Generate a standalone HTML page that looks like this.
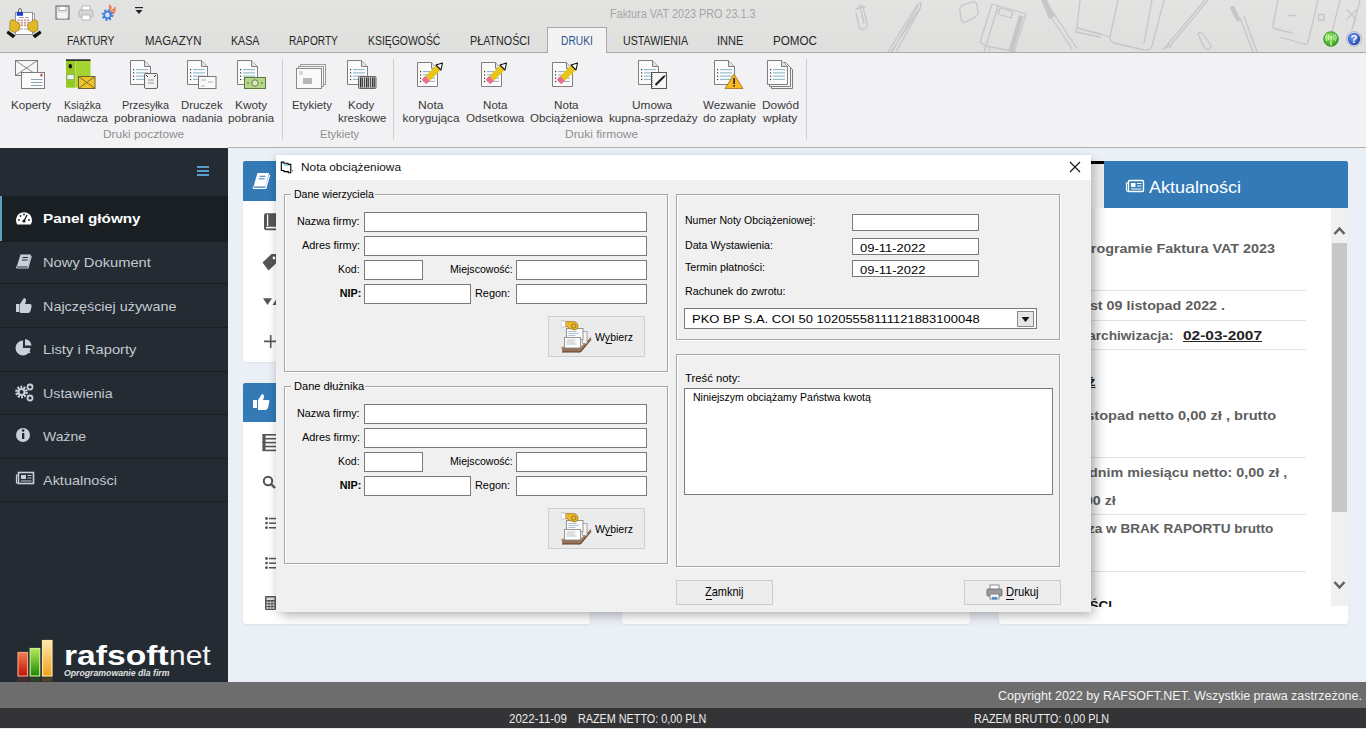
<!DOCTYPE html>
<html><head><meta charset="utf-8">
<style>
*{margin:0;padding:0;box-sizing:border-box}
html,body{width:1366px;height:729px;overflow:hidden;background:#ebeff6;font-family:"Liberation Sans",sans-serif;position:relative}
.a{position:absolute}
.t{position:absolute;white-space:nowrap;line-height:1;transform-origin:0 0}
</style></head><body>
<div class="a" style="left:0px;top:0px;width:1366px;height:52px;background:linear-gradient(#e3e4e2,#dfe0de)"></div>
<svg class="a" style="left:0;top:0" width="1366" height="52" viewBox="0 0 1366 52"><g fill="none" stroke="#c6c6c6" stroke-width="1.3" stroke-linecap="round" stroke-linejoin="round">
    <path d="M858 8 q2 -4 5 -1 l4 16 q1 5 -3 6 q-4 1 -5 -3 l-3 -13 M861 10 l3 13 M856 9 l9 -2"/>
    <path d="M888 52 L917 5 L921 2.5 L920.5 7 L891 52 M892 52 L918 6 M896 52 L921 7"/>
    <path d="M960 11 q-1 -4 3 -6 l9 -3 q4 -1 5 3 l1 6 q1 4 -3 6 l-9 5 q-4 1 -5 -3z"/>
    <path d="M992 4 l34 10 -12 38 M992 4 l-12 38 l6 4 l30 6 M998 6 l-12 40"/>
    <path d="M1000 8 l13 4 -2 6 -13 -4z"/>
    <path d="M1076 47 l-24 -36 M1072 49 l-23 -35 M1076 47 l1 1"/>
    <path d="M1080 0 l-3 28 l23 6 M1077 28 l-1 4 l24 5"/>
    <path d="M1118 0 l-8 37 q0 4 4 6 l30 7 q6 1 8 -4 l12 -46 M1090 31 l20 6 M1152 0 l-8 43"/>
    <path d="M1205 0 l-37 44 -4 5 6 -3 38 -46 M1168 44 l3 3"/>
    <path d="M1199 36 q-2 -3 1 -4 l3 2 7 10 q2 4 -1 5 q-3 1 -5 -2z"/>
    <path d="M1240 18 l13 34 M1244 16 l13 36"/>
    <path d="M1278 0 l-5 25 q-1 3 3 4 l16 4 M1318 0 l-10 42 q0 3 -4 2 l-24 -7 M1340 0 l-10 40 M1360 0 l-8 30"/>
    <path d="M1289 15.5 h7 M1318.5 14.5 h5.5 v5.5 h-5.5z M1347 10 l9 9 M1356 10 l-9 9"/>
    </g>
    <path d="M1041 0 h6 l8 16 -6 3z" fill="#c6c6c6"/>
    <path d="M1230 8 q1 -3 4 -2 l7 14 -4 2z" fill="#c6c6c6"/>
    <path d="M1019 15 l4.5 1.3 -10.5 36 -4.5 -1.3z" fill="#c6c6c6"/>
    <path d="M986 46 l-2 6 M990 47 l-1 5" stroke="#c6c6c6" stroke-width="1.3"/>
    </svg>
<div class="a" style="left:0px;top:52px;width:1366px;height:1px;background:#a9a9a9"></div>
<div class="t" id="t0" style="left:609.80px;top:7.74px;font-size:12px;color:#a6a6a6;font-weight:normal;font-family:'Liberation Sans',sans-serif;transform:scaleX(0.9020);">Faktura VAT 2023 PRO 23.1.3</div>
<div class="a" style="left:547px;top:27px;width:60px;height:27px;background:#f3f3f4;border:1px solid #a9a9a9;border-bottom:none"></div>
<div class="t" id="t1" style="left:67.30px;top:34.84px;font-size:12px;color:#262626;font-weight:normal;font-family:'Liberation Sans',sans-serif;transform:scaleX(0.8617);">FAKTURY</div>
<div class="t" id="t2" style="left:144.90px;top:34.84px;font-size:12px;color:#262626;font-weight:normal;font-family:'Liberation Sans',sans-serif;transform:scaleX(0.9521);">MAGAZYN</div>
<div class="t" id="t3" style="left:231.30px;top:34.84px;font-size:12px;color:#262626;font-weight:normal;font-family:'Liberation Sans',sans-serif;transform:scaleX(0.8871);">KASA</div>
<div class="t" id="t4" style="left:289.30px;top:34.84px;font-size:12px;color:#262626;font-weight:normal;font-family:'Liberation Sans',sans-serif;transform:scaleX(0.8461);">RAPORTY</div>
<div class="t" id="t5" style="left:368.30px;top:34.84px;font-size:12px;color:#262626;font-weight:normal;font-family:'Liberation Sans',sans-serif;transform:scaleX(0.8687);">KSIĘGOWOŚĆ</div>
<div class="t" id="t6" style="left:470.20px;top:34.84px;font-size:12px;color:#262626;font-weight:normal;font-family:'Liberation Sans',sans-serif;transform:scaleX(0.8953);">PŁATNOŚCI</div>
<div class="t" id="t7" style="left:560.60px;top:34.84px;font-size:12px;color:#2c5391;font-weight:normal;font-family:'Liberation Sans',sans-serif;transform:scaleX(0.8515);">DRUKI</div>
<div class="t" id="t8" style="left:622.50px;top:34.84px;font-size:12px;color:#262626;font-weight:normal;font-family:'Liberation Sans',sans-serif;transform:scaleX(0.8862);">USTAWIENIA</div>
<div class="t" id="t9" style="left:717.10px;top:34.84px;font-size:12px;color:#262626;font-weight:normal;font-family:'Liberation Sans',sans-serif;transform:scaleX(0.9208);">INNE</div>
<div class="t" id="t10" style="left:772.70px;top:34.84px;font-size:12px;color:#262626;font-weight:normal;font-family:'Liberation Sans',sans-serif;transform:scaleX(0.9704);">POMOC</div>
<svg class="a" style="left:0px;top:0px;" width="44" height="42" viewBox="0 0 44 42">
    <path d="M18.5 12 v-2.5 q1.5 -2.5 3 0 v2.5" fill="none" stroke="#555" stroke-width="0.9"/>
    <rect x="17.5" y="13.5" width="17" height="21" fill="#f0f0f0" stroke="#999" stroke-width="0.8"/>
    <rect x="15.5" y="12.5" width="17" height="22" fill="#fdfdfd" stroke="#8a8a8a" stroke-width="0.9"/>
    <rect x="16.8" y="12" width="6.2" height="3.8" fill="#1a3fc8"/>
    <path d="M19 17.5 h5 M25.5 17.5 h3 M19 29 h4 M24 29 h5" stroke="#888" stroke-width="0.8"/>
    <g fill="#c89090"><rect x="17.5" y="19.5" width="2.2" height="1.6"/><rect x="20.7" y="19.5" width="2.2" height="1.6"/><rect x="23.9" y="19.5" width="2.2" height="1.6"/><rect x="27.1" y="19.5" width="2.2" height="1.6"/>
    <rect x="17.5" y="22" width="2.2" height="1.6"/><rect x="20.7" y="22" width="2.2" height="1.6"/><rect x="23.9" y="22" width="2.2" height="1.6"/><rect x="27.1" y="22" width="2.2" height="1.6"/>
    <rect x="17.5" y="24.5" width="2.2" height="1.6"/><rect x="20.7" y="24.5" width="2.2" height="1.6"/><rect x="23.9" y="24.5" width="2.2" height="1.6"/><rect x="27.1" y="24.5" width="2.2" height="1.6"/></g>
    <path d="M9.8 23 q0.5 -3.8 3.7 -3.2 q3 1 6.8 5.5 l-1.5 5 l-4.5 2.2 l-4.5 -2.5z" fill="#e0b828" stroke="#8a7010" stroke-width="0.6"/>
    <path d="M37.8 23 q-0.5 -3.8 -3.7 -3.2 q-3 1 -6.8 5.5 l1.5 5 l4.5 2.2 l4.5 -2.5z" fill="#e0b828" stroke="#8a7010" stroke-width="0.6"/>
    <path d="M8 30.5 l7.5 5 l-2.5 2.8 l-6.5 -5z M40 30.5 l-7.5 5 l2.5 2.8 l6.5 -5z" fill="#111"/>
    </svg>
<svg class="a" style="left:55px;top:5px;" width="15" height="15" viewBox="0 0 15 15"><rect x="1" y="1" width="13" height="13" fill="#e4e4e4" stroke="#5a5a5a" stroke-width="1"/>
    <rect x="4" y="1.5" width="7" height="4" fill="#fff" stroke="#888" stroke-width="0.6"/><rect x="3" y="8" width="9" height="5.5" fill="#f4f4f4"/></svg>
<svg class="a" style="left:78px;top:5px;" width="16" height="16" viewBox="0 0 16 16"><rect x="4" y="1" width="8" height="5" fill="#fff" stroke="#aaa" stroke-width="0.8"/>
    <rect x="1" y="5" width="14" height="7" rx="1.5" fill="#d6d6d6" stroke="#aaa" stroke-width="0.8"/>
    <rect x="4" y="10" width="8" height="5" fill="#fff" stroke="#aaa" stroke-width="0.8"/></svg>
<svg class="a" style="left:101px;top:3px;" width="17" height="19" viewBox="0 0 17 19"><path d="M8 1 q4 2 2 6 q3 -1 4 -4 q2 4 -1 8 l-5 1z" fill="#f07050" opacity=".9"/><path d="M9 5 q2 1 1 4 q2 -1 2.5 -2.5 q0.5 3 -2 5z" fill="#f8c080"/>
    <circle cx="6.5" cy="12" r="4.6" fill="none" stroke="#3a80e0" stroke-width="2.6" stroke-dasharray="1.8 1.8"/><circle cx="6.5" cy="12" r="3.3" fill="none" stroke="#3a80e0" stroke-width="1.8"/><circle cx="6.5" cy="12" r="1.5" fill="#c8e0ff"/></svg>
<svg class="a" style="left:134px;top:6px;" width="10" height="9" viewBox="0 0 10 9"><rect x="1" y="1" width="8" height="1.2" fill="#222"/><path d="M1.5 4 h7 l-3.5 4z" fill="#222"/></svg>
<svg class="a" style="left:1323px;top:31px;" width="16" height="16" viewBox="0 0 16 16"><defs><radialGradient id="gg" cx="40%" cy="35%" r="70%"><stop offset="0" stop-color="#a8ec70"/><stop offset="1" stop-color="#2a9a10"/></radialGradient></defs>
    <circle cx="8" cy="8" r="7.3" fill="url(#gg)" stroke="#2a8a20" stroke-width="0.8"/><path d="M7.3 14.5 L7.8 7 h0.6 L8.9 14.5z" fill="#c8f8b0"/><circle cx="8.1" cy="6.6" r="1.1" fill="#e0ffd0"/><path d="M5.6 9 q-1.2 -2.5 0 -5 M10.6 9 q1.2 -2.5 0 -5 M3.8 10 q-1.8 -3.5 0 -7 M12.4 10 q1.8 -3.5 0 -7" stroke="#d8ffc8" stroke-width="0.9" fill="none"/></svg>
<svg class="a" style="left:1346px;top:31px;" width="16" height="16" viewBox="0 0 16 16"><defs><radialGradient id="bg" cx="40%" cy="35%" r="70%"><stop offset="0" stop-color="#7aa0f0"/><stop offset="1" stop-color="#1a3fb0"/></radialGradient></defs>
    <circle cx="8" cy="8" r="7.4" fill="#e8ecf8" stroke="#7080a0" stroke-width="0.5"/><circle cx="8" cy="8" r="6.2" fill="url(#bg)"/><text x="8" y="12.3" text-anchor="middle" font-family="Liberation Sans" font-weight="bold" font-size="11.5" fill="#fff">?</text></svg>
<div class="a" style="left:0px;top:53px;width:1366px;height:95px;background:#f2f2f4"></div>
<div class="a" style="left:0px;top:146px;width:1366px;height:1px;background:#f7f7f8"></div>
<div class="a" style="left:228px;top:147px;width:1138px;height:1px;background:#acacae"></div>
<div class="t" id="t11" style="left:10.50px;top:100.01px;font-size:11.8px;color:#383838;font-weight:normal;font-family:'Liberation Sans',sans-serif;transform:scaleX(0.9839);">Koperty</div>
<div class="t" id="t12" style="left:63.70px;top:100.01px;font-size:11.8px;color:#383838;font-weight:normal;font-family:'Liberation Sans',sans-serif;transform:scaleX(0.8956);">Książka</div>
<div class="t" id="t13" style="left:56.80px;top:112.51px;font-size:11.8px;color:#383838;font-weight:normal;font-family:'Liberation Sans',sans-serif;transform:scaleX(0.9562);">nadawcza</div>
<div class="t" id="t14" style="left:121.50px;top:100.01px;font-size:11.8px;color:#383838;font-weight:normal;font-family:'Liberation Sans',sans-serif;transform:scaleX(0.9190);">Przesyłka</div>
<div class="t" id="t15" style="left:113.50px;top:112.51px;font-size:11.8px;color:#383838;font-weight:normal;font-family:'Liberation Sans',sans-serif;transform:scaleX(1.0148);">pobraniowa</div>
<div class="t" id="t16" style="left:181.40px;top:100.01px;font-size:11.8px;color:#383838;font-weight:normal;font-family:'Liberation Sans',sans-serif;transform:scaleX(0.9615);">Druczek</div>
<div class="t" id="t17" style="left:181.80px;top:112.51px;font-size:11.8px;color:#383838;font-weight:normal;font-family:'Liberation Sans',sans-serif;transform:scaleX(0.9690);">nadania</div>
<div class="t" id="t18" style="left:235.30px;top:100.01px;font-size:11.8px;color:#383838;font-weight:normal;font-family:'Liberation Sans',sans-serif;transform:scaleX(1.0054);">Kwoty</div>
<div class="t" id="t19" style="left:228.40px;top:112.51px;font-size:11.8px;color:#383838;font-weight:normal;font-family:'Liberation Sans',sans-serif;transform:scaleX(1.0061);">pobrania</div>
<div class="t" id="t20" style="left:291.50px;top:100.01px;font-size:11.8px;color:#383838;font-weight:normal;font-family:'Liberation Sans',sans-serif;transform:scaleX(0.9658);">Etykiety</div>
<div class="t" id="t21" style="left:348.30px;top:100.01px;font-size:11.8px;color:#383838;font-weight:normal;font-family:'Liberation Sans',sans-serif;transform:scaleX(0.9743);">Kody</div>
<div class="t" id="t22" style="left:337.60px;top:112.51px;font-size:11.8px;color:#383838;font-weight:normal;font-family:'Liberation Sans',sans-serif;transform:scaleX(0.9713);">kreskowe</div>
<div class="t" id="t23" style="left:418.30px;top:100.01px;font-size:11.8px;color:#383838;font-weight:normal;font-family:'Liberation Sans',sans-serif;transform:scaleX(1.0232);">Nota</div>
<div class="t" id="t24" style="left:402.50px;top:112.51px;font-size:11.8px;color:#383838;font-weight:normal;font-family:'Liberation Sans',sans-serif;">korygująca</div>
<div class="t" id="t25" style="left:482.80px;top:100.01px;font-size:11.8px;color:#383838;font-weight:normal;font-family:'Liberation Sans',sans-serif;transform:scaleX(0.9831);">Nota</div>
<div class="t" id="t26" style="left:465.50px;top:112.51px;font-size:11.8px;color:#383838;font-weight:normal;font-family:'Liberation Sans',sans-serif;transform:scaleX(0.9879);">Odsetkowa</div>
<div class="t" id="t27" style="left:553.80px;top:100.01px;font-size:11.8px;color:#383838;font-weight:normal;font-family:'Liberation Sans',sans-serif;transform:scaleX(0.9871);">Nota</div>
<div class="t" id="t28" style="left:529.50px;top:112.51px;font-size:11.8px;color:#383838;font-weight:normal;font-family:'Liberation Sans',sans-serif;transform:scaleX(0.9837);">Obciążeniowa</div>
<div class="t" id="t29" style="left:632.40px;top:100.01px;font-size:11.8px;color:#383838;font-weight:normal;font-family:'Liberation Sans',sans-serif;transform:scaleX(1.0050);">Umowa</div>
<div class="t" id="t30" style="left:608.70px;top:112.51px;font-size:11.8px;color:#383838;font-weight:normal;font-family:'Liberation Sans',sans-serif;transform:scaleX(0.9862);">kupna-sprzedaży</div>
<div class="t" id="t31" style="left:703.20px;top:100.01px;font-size:11.8px;color:#383838;font-weight:normal;font-family:'Liberation Sans',sans-serif;transform:scaleX(0.9757);">Wezwanie</div>
<div class="t" id="t32" style="left:702.60px;top:112.51px;font-size:11.8px;color:#383838;font-weight:normal;font-family:'Liberation Sans',sans-serif;transform:scaleX(0.9873);">do zapłaty</div>
<div class="t" id="t33" style="left:761.70px;top:100.01px;font-size:11.8px;color:#383838;font-weight:normal;font-family:'Liberation Sans',sans-serif;transform:scaleX(1.0072);">Dowód</div>
<div class="t" id="t34" style="left:763.30px;top:112.51px;font-size:11.8px;color:#383838;font-weight:normal;font-family:'Liberation Sans',sans-serif;transform:scaleX(1.0253);">wpłaty</div>
<div class="t" id="t35" style="left:102.50px;top:129.41px;font-size:11.8px;color:#8e8e8e;font-weight:normal;font-family:'Liberation Sans',sans-serif;transform:scaleX(1.0067);">Druki pocztowe</div>
<div class="t" id="t36" style="left:319.90px;top:129.41px;font-size:11.8px;color:#8e8e8e;font-weight:normal;font-family:'Liberation Sans',sans-serif;transform:scaleX(0.9489);">Etykiety</div>
<div class="t" id="t37" style="left:564.60px;top:129.41px;font-size:11.8px;color:#8e8e8e;font-weight:normal;font-family:'Liberation Sans',sans-serif;transform:scaleX(1.0137);">Druki firmowe</div>
<div class="a" style="left:282px;top:59px;width:1px;height:81px;background:#cfcfcf"></div>
<div class="a" style="left:393px;top:59px;width:1px;height:81px;background:#cfcfcf"></div>
<div class="a" style="left:806px;top:59px;width:1px;height:81px;background:#cfcfcf"></div>
<svg class="a" style="left:0;top:0" width="1366" height="150" viewBox="0 0 1366 150"><rect x="15.5" y="60.5" width="22" height="15" fill="#f6f6f6" stroke="#7a7a7a"/><path d="M15.5 60.5 L37.5 75.5 M37.5 60.5 L15.5 75.5" fill="none" stroke="#7a7a7a" stroke-width="0.9"/><rect x="21.5" y="72.5" width="23" height="16" fill="#fbfbfb" stroke="#7a7a7a"/><rect x="40.5" y="73.8" width="1.8" height="2.6" fill="#b03040"/><path d="M31 79.5 h11.5 M31 82.5 h11.5 M31 85.5 h11.5" stroke="#7e98a4" stroke-width="0.9"/><path d="M66 60 h24.5 v27.5 h-24.5z" fill="#a4d432"/><rect x="66" y="60" width="9" height="27.5" fill="#96c82a"/><rect x="75" y="60" width="0.8" height="27.5" fill="#c0e860"/><path d="M66 59.3 h24.5 v1.6 h-24.5z" fill="#222"/><ellipse cx="70.3" cy="66.3" rx="1.7" ry="2.3" fill="#111"/><rect x="67" y="74.5" width="7" height="5" fill="#f0f4ea" stroke="#7a9a50" stroke-width="0.6"/><rect x="78.5" y="76.5" width="16.5" height="12" fill="#eec428" stroke="#6a6030"/><path d="M78.5 76.5 L95 88.5 M95 76.5 L78.5 88.5" fill="none" stroke="#6a6030" stroke-width="0.9"/><path d="M130.5 60.5 h14 l6 6 v18 h-20 z" fill="#fbfbfb" stroke="#7e7e7e" stroke-width="1"/><path d="M144.5 60.5 v6 h6" fill="#e0e0e0" stroke="#7e7e7e" stroke-width="1"/><rect x="133" y="69.0" width="1.2" height="1.2" fill="#333"/><rect x="136" y="69.0" width="12" height="1.1" fill="#8fb8c8"/><rect x="133" y="72.3" width="1.2" height="1.2" fill="#333"/><rect x="136" y="72.3" width="12" height="1.1" fill="#8fb8c8"/><rect x="133" y="75.6" width="1.2" height="1.2" fill="#333"/><rect x="136" y="75.6" width="12" height="1.1" fill="#8fb8c8"/><rect x="133" y="78.9" width="1.2" height="1.2" fill="#333"/><rect x="136" y="78.9" width="12" height="1.1" fill="#8fb8c8"/><rect x="144.5" y="73.5" width="13" height="15" rx="1.5" fill="#f2f2f2" stroke="#666"/><path d="M146 75 l2 2 M156 75 l-2 2" stroke="#333"/><path d="M148 80 h6 M148 83 h6" stroke="#999"/><path d="M187.5 60.5 h14 l6 6 v18 h-20 z" fill="#fbfbfb" stroke="#7e7e7e" stroke-width="1"/><path d="M201.5 60.5 v6 h6" fill="#e0e0e0" stroke="#7e7e7e" stroke-width="1"/><rect x="190" y="69.0" width="1.2" height="1.2" fill="#333"/><rect x="193" y="69.0" width="12" height="1.1" fill="#8fb8c8"/><rect x="190" y="72.3" width="1.2" height="1.2" fill="#333"/><rect x="193" y="72.3" width="12" height="1.1" fill="#8fb8c8"/><rect x="190" y="75.6" width="1.2" height="1.2" fill="#333"/><rect x="193" y="75.6" width="12" height="1.1" fill="#8fb8c8"/><rect x="190" y="78.9" width="1.2" height="1.2" fill="#333"/><rect x="193" y="78.9" width="12" height="1.1" fill="#8fb8c8"/><rect x="198.5" y="76.5" width="17.5" height="12" fill="#fafafa" stroke="#777"/><path d="M201 80 h5 M208 82 h5 M201 86 h4" stroke="#b0b0b0"/><path d="M237.5 60.5 h14 l6 6 v18 h-20 z" fill="#fbfbfb" stroke="#7e7e7e" stroke-width="1"/><path d="M251.5 60.5 v6 h6" fill="#e0e0e0" stroke="#7e7e7e" stroke-width="1"/><rect x="240" y="69.0" width="1.2" height="1.2" fill="#333"/><rect x="243" y="69.0" width="12" height="1.1" fill="#8fb8c8"/><rect x="240" y="72.3" width="1.2" height="1.2" fill="#333"/><rect x="243" y="72.3" width="12" height="1.1" fill="#8fb8c8"/><rect x="240" y="75.6" width="1.2" height="1.2" fill="#333"/><rect x="243" y="75.6" width="12" height="1.1" fill="#8fb8c8"/><rect x="240" y="78.9" width="1.2" height="1.2" fill="#333"/><rect x="243" y="78.9" width="12" height="1.1" fill="#8fb8c8"/><rect x="244.5" y="77.5" width="21" height="11" fill="#b6d48a" stroke="#5a7a3a"/><circle cx="255" cy="83" r="3.2" fill="#dbe8c4" stroke="#4a6a2a" stroke-width="0.8"/><path d="M247 83 h2 M261 83 h2" stroke="#4a6a2a"/><rect x="300.5" y="64.5" width="25" height="20" fill="#f4f4f4" stroke="#9a9a9a"/><rect x="298.5" y="66.5" width="25" height="20" fill="#f6f6f6" stroke="#9a9a9a"/><rect x="296.5" y="68.5" width="25" height="20" fill="#fafafa" stroke="#8a8a8a"/><path d="M303 79 h9 M303 81 h9 M303 83 h9" stroke="#666" stroke-width="0.9"/><path d="M299 72 h4 M299 74 h4" stroke="#999" stroke-width="0.6"/><path d="M347.5 60.5 h14 l6 6 v18 h-20 z" fill="#fbfbfb" stroke="#7e7e7e" stroke-width="1"/><path d="M361.5 60.5 v6 h6" fill="#e0e0e0" stroke="#7e7e7e" stroke-width="1"/><rect x="350" y="69.0" width="1.2" height="1.2" fill="#333"/><rect x="353" y="69.0" width="12" height="1.1" fill="#8fb8c8"/><rect x="350" y="72.3" width="1.2" height="1.2" fill="#333"/><rect x="353" y="72.3" width="12" height="1.1" fill="#8fb8c8"/><rect x="350" y="75.6" width="1.2" height="1.2" fill="#333"/><rect x="353" y="75.6" width="12" height="1.1" fill="#8fb8c8"/><rect x="350" y="78.9" width="1.2" height="1.2" fill="#333"/><rect x="353" y="78.9" width="12" height="1.1" fill="#8fb8c8"/><rect x="358.5" y="76.5" width="17.5" height="12" rx="1" fill="#c8c8c8" stroke="#666"/><rect x="360.0" y="77.5" width="1.4" height="10" fill="#333"/><rect x="362.0" y="77.5" width="0.8" height="10" fill="#333"/><rect x="364.0" y="77.5" width="0.8" height="10" fill="#333"/><rect x="366.0" y="77.5" width="1.4" height="10" fill="#333"/><rect x="368.0" y="77.5" width="0.8" height="10" fill="#333"/><rect x="370.0" y="77.5" width="0.8" height="10" fill="#333"/><rect x="372.0" y="77.5" width="1.4" height="10" fill="#333"/><rect x="374.0" y="77.5" width="0.8" height="10" fill="#333"/><path d="M417.5 62.5 h14 l6 6 v18 h-20 z" fill="#fbfbfb" stroke="#7e7e7e" stroke-width="1"/><path d="M431.5 62.5 v6 h6" fill="#e0e0e0" stroke="#7e7e7e" stroke-width="1"/><rect x="420" y="71.0" width="1.2" height="1.2" fill="#333"/><rect x="423" y="71.0" width="12" height="1.1" fill="#8fb8c8"/><rect x="420" y="74.3" width="1.2" height="1.2" fill="#333"/><rect x="423" y="74.3" width="12" height="1.1" fill="#8fb8c8"/><rect x="420" y="77.6" width="1.2" height="1.2" fill="#333"/><rect x="423" y="77.6" width="12" height="1.1" fill="#8fb8c8"/><rect x="420" y="80.9" width="1.2" height="1.2" fill="#333"/><rect x="423" y="80.9" width="12" height="1.1" fill="#8fb8c8"/><path d="M427.5 78.5 L438.5 67.5" stroke="#e8c418" stroke-width="6.5"/><path d="M424 82 L427.6 78.4" stroke="#e8708a" stroke-width="6.5"/><path d="M436 65 L441 70 L442.5 63z" fill="#fff" stroke="#111" stroke-width="1.1" stroke-linejoin="round"/><path d="M481.5 62.5 h14 l6 6 v18 h-20 z" fill="#fbfbfb" stroke="#7e7e7e" stroke-width="1"/><path d="M495.5 62.5 v6 h6" fill="#e0e0e0" stroke="#7e7e7e" stroke-width="1"/><rect x="484" y="71.0" width="1.2" height="1.2" fill="#333"/><rect x="487" y="71.0" width="12" height="1.1" fill="#8fb8c8"/><rect x="484" y="74.3" width="1.2" height="1.2" fill="#333"/><rect x="487" y="74.3" width="12" height="1.1" fill="#8fb8c8"/><rect x="484" y="77.6" width="1.2" height="1.2" fill="#333"/><rect x="487" y="77.6" width="12" height="1.1" fill="#8fb8c8"/><rect x="484" y="80.9" width="1.2" height="1.2" fill="#333"/><rect x="487" y="80.9" width="12" height="1.1" fill="#8fb8c8"/><path d="M491.5 78.5 L502.5 67.5" stroke="#e8c418" stroke-width="6.5"/><path d="M488 82 L491.6 78.4" stroke="#e8708a" stroke-width="6.5"/><path d="M500 65 L505 70 L506.5 63z" fill="#fff" stroke="#111" stroke-width="1.1" stroke-linejoin="round"/><path d="M552.5 62.5 h14 l6 6 v18 h-20 z" fill="#fbfbfb" stroke="#7e7e7e" stroke-width="1"/><path d="M566.5 62.5 v6 h6" fill="#e0e0e0" stroke="#7e7e7e" stroke-width="1"/><rect x="555" y="71.0" width="1.2" height="1.2" fill="#333"/><rect x="558" y="71.0" width="12" height="1.1" fill="#8fb8c8"/><rect x="555" y="74.3" width="1.2" height="1.2" fill="#333"/><rect x="558" y="74.3" width="12" height="1.1" fill="#8fb8c8"/><rect x="555" y="77.6" width="1.2" height="1.2" fill="#333"/><rect x="558" y="77.6" width="12" height="1.1" fill="#8fb8c8"/><rect x="555" y="80.9" width="1.2" height="1.2" fill="#333"/><rect x="558" y="80.9" width="12" height="1.1" fill="#8fb8c8"/><path d="M562.5 78.5 L573.5 67.5" stroke="#e8c418" stroke-width="6.5"/><path d="M559 82 L562.6 78.4" stroke="#e8708a" stroke-width="6.5"/><path d="M571 65 L576 70 L577.5 63z" fill="#fff" stroke="#111" stroke-width="1.1" stroke-linejoin="round"/><path d="M638.5 60.5 h14 l6 6 v18 h-20 z" fill="#fbfbfb" stroke="#7e7e7e" stroke-width="1"/><path d="M652.5 60.5 v6 h6" fill="#e0e0e0" stroke="#7e7e7e" stroke-width="1"/><rect x="641" y="69.0" width="1.2" height="1.2" fill="#333"/><rect x="644" y="69.0" width="12" height="1.1" fill="#8fb8c8"/><rect x="641" y="72.3" width="1.2" height="1.2" fill="#333"/><rect x="644" y="72.3" width="12" height="1.1" fill="#8fb8c8"/><rect x="641" y="75.6" width="1.2" height="1.2" fill="#333"/><rect x="644" y="75.6" width="12" height="1.1" fill="#8fb8c8"/><rect x="641" y="78.9" width="1.2" height="1.2" fill="#333"/><rect x="644" y="78.9" width="12" height="1.1" fill="#8fb8c8"/><rect x="651.5" y="72.5" width="15" height="16" fill="#f6f6f6" stroke="#555"/><path d="M652 74 v13" stroke="#333" stroke-dasharray="1 1"/><path d="M656 86 l8 -8 2 -3 -3 1 -8 8z" fill="#222"/><path d="M714.5 60.5 h14 l6 6 v18 h-20 z" fill="#fbfbfb" stroke="#7e7e7e" stroke-width="1"/><path d="M728.5 60.5 v6 h6" fill="#e0e0e0" stroke="#7e7e7e" stroke-width="1"/><rect x="717" y="69.0" width="1.2" height="1.2" fill="#333"/><rect x="720" y="69.0" width="12" height="1.1" fill="#8fb8c8"/><rect x="717" y="72.3" width="1.2" height="1.2" fill="#333"/><rect x="720" y="72.3" width="12" height="1.1" fill="#8fb8c8"/><rect x="717" y="75.6" width="1.2" height="1.2" fill="#333"/><rect x="720" y="75.6" width="12" height="1.1" fill="#8fb8c8"/><rect x="717" y="78.9" width="1.2" height="1.2" fill="#333"/><rect x="720" y="78.9" width="12" height="1.1" fill="#8fb8c8"/><path d="M734 74 l9 14.5 h-18z" fill="#f5b820" stroke="#a07010" stroke-width="0.8"/><rect x="733.3" y="78" width="1.6" height="6" fill="#222"/><rect x="733.3" y="85" width="1.6" height="1.6" fill="#222"/><path d="M771.5 64.5 h16 l5 5 v19 h-21z" fill="#f4f4f4" stroke="#7e7e7e"/><path d="M769.5 62.5 h16 l5 5 v19 h-21z" fill="#f8f8f8" stroke="#7e7e7e"/><path d="M767.5 60.5 h14 l6 6 v18 h-20 z" fill="#fbfbfb" stroke="#7e7e7e" stroke-width="1"/><path d="M781.5 60.5 v6 h6" fill="#e0e0e0" stroke="#7e7e7e" stroke-width="1"/><rect x="770" y="69.0" width="1.2" height="1.2" fill="#333"/><rect x="773" y="69.0" width="12" height="1.1" fill="#8fb8c8"/><rect x="770" y="72.3" width="1.2" height="1.2" fill="#333"/><rect x="773" y="72.3" width="12" height="1.1" fill="#8fb8c8"/><rect x="770" y="75.6" width="1.2" height="1.2" fill="#333"/><rect x="773" y="75.6" width="12" height="1.1" fill="#8fb8c8"/><rect x="770" y="78.9" width="1.2" height="1.2" fill="#333"/><rect x="773" y="78.9" width="12" height="1.1" fill="#8fb8c8"/></svg>
<div class="a" style="left:228px;top:148px;width:1138px;height:534px;background:#ebeff6"></div>
<div class="a" style="left:243px;top:161px;width:347px;height:201px;background:#fff;border-radius:3px;box-shadow:0 1px 2px rgba(0,0,0,.06)"></div>
<div class="a" style="left:243px;top:161px;width:347px;height:40px;background:#337ab7;border-radius:2px 2px 0 0"></div>
<div class="a" style="left:243px;top:383px;width:347px;height:241px;background:#fff;border-radius:3px;box-shadow:0 1px 2px rgba(0,0,0,.06)"></div>
<div class="a" style="left:243px;top:383px;width:347px;height:39px;background:#337ab7;border-radius:2px 2px 0 0"></div>
<div class="a" style="left:622px;top:161px;width:348px;height:463px;background:#fff;border-radius:3px;box-shadow:0 1px 2px rgba(0,0,0,.06)"></div>
<div class="a" style="left:999px;top:161px;width:349px;height:463px;background:#fff;border-radius:3px;box-shadow:0 1px 2px rgba(0,0,0,.06)"></div>
<div class="a" style="left:999px;top:161px;width:349px;height:47px;background:#337ab7;border-radius:2px 2px 0 0"></div>
<svg class="a" style="left:0;top:0" width="600" height="729" viewBox="0 0 600 729"><path d="M257.5 173 h11.5 l-3.5 13.5 h-12z" fill="#fff"/><path d="M253.3 186.8 q-0.5 1.5 1.5 1.5 h11 l3.8 -13.5" fill="none" stroke="#fff" stroke-width="1.3"/><path d="M259.5 176.3 h6 M258.8 178.8 h6" stroke="#337ab7" stroke-width="1"/><rect x="253" y="400" width="4" height="8" fill="#fff"/><path d="M258 400 l4 -6 q2 0 2 3 l-1 3 h5 q2 0 1 3 l-1 5 q-1 2 -3 2 h-7z" fill="#fff"/><path d="M265.5 213.2 h11 v17 h-10 q-2.5 0 -2.5 -2.5 v-12 q0 -2.5 1.5 -2.5z" fill="#555"/><rect x="267" y="214.5" width="1.2" height="11.5" fill="#fff"/><rect x="266" y="226.8" width="11" height="1.6" fill="#fff"/><path d="M262.5 262.5 l9 -8.5 h5 v9 l-8 7.5z" fill="#555"/><circle cx="274" cy="258" r="1.4" fill="#fff"/><path d="M263 298.2 h9 l-4.5 6.7z M272.5 304.9 l4 -6 v6z" fill="#555"/><path d="M264 341.4 h13 M270.7 335 v13" stroke="#555" stroke-width="1.6"/><rect x="262.5" y="434" width="3" height="17" fill="#555"/><rect x="262.5" y="434.0" width="14" height="1.6" fill="#555"/><rect x="262.5" y="437.9" width="14" height="1.6" fill="#555"/><rect x="262.5" y="441.8" width="14" height="1.6" fill="#555"/><rect x="262.5" y="445.7" width="14" height="1.6" fill="#555"/><rect x="262.5" y="449.6" width="14" height="1.6" fill="#555"/><circle cx="268" cy="481" r="4.2" fill="none" stroke="#555" stroke-width="2"/><path d="M271 484 l4 4" stroke="#555" stroke-width="2.4"/><circle cx="266.5" cy="518.5" r="1.4" fill="#555"/><rect x="269" y="517.8" width="8" height="1.5" fill="#555"/><circle cx="266.5" cy="523.1" r="1.4" fill="#555"/><rect x="269" y="522.4" width="8" height="1.5" fill="#555"/><circle cx="266.5" cy="527.7" r="1.4" fill="#555"/><rect x="269" y="527.0" width="8" height="1.5" fill="#555"/><circle cx="266.5" cy="558.5" r="1.4" fill="#555"/><rect x="269" y="557.8" width="8" height="1.5" fill="#555"/><circle cx="266.5" cy="563.1" r="1.4" fill="#555"/><rect x="269" y="562.4" width="8" height="1.5" fill="#555"/><circle cx="266.5" cy="567.7" r="1.4" fill="#555"/><rect x="269" y="567.0" width="8" height="1.5" fill="#555"/><rect x="265" y="596" width="11" height="14" rx="1" fill="#555"/><rect x="266.5" y="597.5" width="8" height="2.5" fill="#ddd"/><rect x="266.5" y="601.5" width="2" height="1.8" fill="#ddd"/><rect x="269.5" y="601.5" width="2" height="1.8" fill="#ddd"/><rect x="272.5" y="601.5" width="2" height="1.8" fill="#ddd"/><rect x="266.5" y="604.3" width="2" height="1.8" fill="#ddd"/><rect x="269.5" y="604.3" width="2" height="1.8" fill="#ddd"/><rect x="272.5" y="604.3" width="2" height="1.8" fill="#ddd"/><rect x="266.5" y="607.1" width="2" height="1.8" fill="#ddd"/><rect x="269.5" y="607.1" width="2" height="1.8" fill="#ddd"/><rect x="272.5" y="607.1" width="2" height="1.8" fill="#ddd"/></svg>
<svg class="a" style="left:1125px;top:179px;" width="20" height="15" viewBox="0 0 20 15"><rect x="3.5" y="1.5" width="15" height="11" rx="1" fill="none" stroke="#fff" stroke-width="1.4"/><path d="M3.5 4 h-2 v7 q0 1.5 2 1.5" fill="none" stroke="#fff" stroke-width="1.2"/><rect x="6" y="4" width="4.5" height="4" fill="#fff"/><path d="M12 4.5 h4.5 M12 7 h4.5 M6 10 h10.5" stroke="#fff" stroke-width="1.1"/></svg>
<div class="t" id="t38" style="left:1149.00px;top:179.03px;font-size:16.5px;color:#ffffff;font-weight:normal;font-family:'Liberation Sans',sans-serif;transform:scaleX(1.0902);">Aktualności</div>
<div class="a" style="left:1331px;top:208px;width:17px;height:398px;background:#f0f0f0"></div>
<div class="a" style="left:1332px;top:243px;width:15px;height:268.5px;background:#c8c8c8"></div>
<svg class="a" style="left:1333px;top:225px;" width="13" height="11" viewBox="0 0 13 11"><path d="M1.5 9 L6.5 3.5 L11.5 9" fill="none" stroke="#606060" stroke-width="2.5"/></svg>
<svg class="a" style="left:1333px;top:580px;" width="13" height="11" viewBox="0 0 13 11"><path d="M1.5 2 L6.5 7.5 L11.5 2" fill="none" stroke="#606060" stroke-width="2.5"/></svg>
<div class="t" id="t39" style="left:1081.50px;top:241.87px;font-size:13.5px;color:#5e5e5e;font-weight:bold;font-family:'Liberation Sans',sans-serif;transform:scaleX(1.0664);">programie Faktura VAT 2023</div>
<div class="a" style="left:1010px;top:290px;width:296px;height:1px;background:#e2e2e2"></div>
<div class="t" id="t40" style="left:1077.50px;top:298.67px;font-size:13.5px;color:#5e5e5e;font-weight:bold;font-family:'Liberation Sans',sans-serif;transform:scaleX(1.0589);">jest 09 listopad 2022 .</div>
<div class="a" style="left:1010px;top:320px;width:296px;height:1px;background:#e2e2e2"></div>
<div class="t" id="t41" style="left:1088.30px;top:329.07px;font-size:13.5px;color:#5e5e5e;font-weight:bold;font-family:'Liberation Sans',sans-serif;transform:scaleX(1.0185);">archiwizacja:</div>
<div class="t" id="t42" style="left:1182.50px;top:329.07px;font-size:13.5px;color:#222;font-weight:bold;font-family:'Liberation Sans',sans-serif;text-decoration:underline;transform:scaleX(1.1439);">02-03-2007</div>
<div class="a" style="left:1010px;top:349px;width:296px;height:1px;background:#e2e2e2"></div>
<div class="t" id="t43" style="left:1074.00px;top:375.27px;font-size:13.5px;color:#222;font-weight:bold;font-family:'Liberation Sans',sans-serif;text-decoration:underline;transform:scaleX(1.1467);">już</div>
<div class="t" id="t44" style="left:1077.50px;top:408.67px;font-size:13.5px;color:#5e5e5e;font-weight:bold;font-family:'Liberation Sans',sans-serif;transform:scaleX(1.0835);">listopad netto 0,00 zł , brutto</div>
<div class="a" style="left:1010px;top:457px;width:296px;height:1px;background:#e2e2e2"></div>
<div class="t" id="t45" style="left:1081.00px;top:465.97px;font-size:13.5px;color:#5e5e5e;font-weight:bold;font-family:'Liberation Sans',sans-serif;transform:scaleX(1.0617);">ednim miesiącu netto: 0,00 zł ,</div>
<div class="t" id="t46" style="left:1085.30px;top:493.57px;font-size:13.5px;color:#5e5e5e;font-weight:bold;font-family:'Liberation Sans',sans-serif;transform:scaleX(1.0485);">00 zł</div>
<div class="a" style="left:1010px;top:514px;width:296px;height:1px;background:#e2e2e2"></div>
<div class="t" id="t47" style="left:1088.30px;top:522.47px;font-size:13.5px;color:#5e5e5e;font-weight:bold;font-family:'Liberation Sans',sans-serif;transform:scaleX(1.0049);">za w BRAK RAPORTU brutto</div>
<div class="a" style="left:1010px;top:571px;width:296px;height:1px;background:#e2e2e2"></div>
<div class="a" style="left:1000px;top:590px;width:200px;height:16.5px;overflow:hidden"><div class="t" style="left:0;top:9px;font-size:13.5px;font-weight:bold;color:#111;width:112px;text-align:right">AKTUALNOŚCI</div></div>
<div class="a" style="left:0px;top:148px;width:228px;height:534px;background:#242b33"></div>
<div class="a" style="left:197px;top:166px;width:12px;height:2px;background:#5a9ccc"></div>
<div class="a" style="left:197px;top:170px;width:12px;height:2px;background:#5a9ccc"></div>
<div class="a" style="left:197px;top:174px;width:12px;height:2px;background:#5a9ccc"></div>
<div class="a" style="left:0px;top:196px;width:228px;height:45px;background:#1a1f24"></div>
<div class="a" style="left:0px;top:196px;width:2px;height:45px;background:#5aa0b8"></div>
<div class="a" style="left:0px;top:241px;width:228px;height:1px;background:#1b2025"></div>
<div class="a" style="left:0px;top:283px;width:228px;height:1px;background:#1b2025"></div>
<div class="a" style="left:0px;top:327px;width:228px;height:1px;background:#1b2025"></div>
<div class="a" style="left:0px;top:371px;width:228px;height:1px;background:#1b2025"></div>
<div class="a" style="left:0px;top:414px;width:228px;height:1px;background:#1b2025"></div>
<div class="a" style="left:0px;top:458px;width:228px;height:1px;background:#1b2025"></div>
<div class="a" style="left:0px;top:501px;width:228px;height:1px;background:#1b2025"></div>
<div class="t" id="t48" style="left:42.80px;top:212.14px;font-size:13.3px;color:#ffffff;font-weight:bold;font-family:'Liberation Sans',sans-serif;transform:scaleX(1.1484);">Panel główny</div>
<div class="t" id="t49" style="left:42.80px;top:256.20px;font-size:13px;color:#c2c9d0;font-weight:normal;font-family:'Liberation Sans',sans-serif;transform:scaleX(1.1313);">Nowy Dokument</div>
<div class="t" id="t50" style="left:43.10px;top:299.90px;font-size:13px;color:#c2c9d0;font-weight:normal;font-family:'Liberation Sans',sans-serif;transform:scaleX(1.1063);">Najczęściej używane</div>
<div class="t" id="t51" style="left:43.00px;top:342.80px;font-size:13px;color:#c2c9d0;font-weight:normal;font-family:'Liberation Sans',sans-serif;transform:scaleX(1.1351);">Listy i Raporty</div>
<div class="t" id="t52" style="left:42.90px;top:387.00px;font-size:13px;color:#c2c9d0;font-weight:normal;font-family:'Liberation Sans',sans-serif;transform:scaleX(1.0960);">Ustawienia</div>
<div class="t" id="t53" style="left:42.90px;top:430.20px;font-size:13px;color:#c2c9d0;font-weight:normal;font-family:'Liberation Sans',sans-serif;transform:scaleX(1.0779);">Ważne</div>
<div class="t" id="t54" style="left:42.90px;top:474.20px;font-size:13px;color:#c2c9d0;font-weight:normal;font-family:'Liberation Sans',sans-serif;transform:scaleX(1.1115);">Aktualności</div>
<svg class="a" style="left:0;top:148px" width="228" height="534" viewBox="0 148 228 534"><path d="M17.2 224.4 A8 8 0 1 1 30.8 224.4z" fill="#fff"/><circle cx="24" cy="221" r="1.6" fill="#1a1f24"/><path d="M24 221 l3 -6" stroke="#1a1f24" stroke-width="1.4"/><g fill="#1a1f24"><circle cx="19" cy="220" r="0.9"/><circle cx="20.5" cy="216" r="0.9"/><circle cx="24" cy="214.5" r="0.9"/><circle cx="29" cy="220" r="0.9"/></g><path d="M20.5 254.5 h10.5 l-3.2 12 h-11z" fill="#c8d0d8"/><path d="M16.6 266.5 q-0.5 1.5 1.3 1.5 h10 l3.4 -12" fill="none" stroke="#c8d0d8" stroke-width="1.2"/><path d="M22.5 257.5 h5.5 M22 260 h5.5" stroke="#232a31" stroke-width="1"/><rect x="16" y="304" width="3.5" height="8" fill="#c8d0d8"/><path d="M20 304 l4 -6 q2 0 2 3 l-1 3 h5 q2 0 1.5 3 l-1 4 q-0.5 2 -2.5 2 h-8z" fill="#c8d0d8"/><path d="M23 340.5 a7.5 7.5 0 1 0 7.5 7.5 h-7.5z" fill="#c8d0d8"/><path d="M25 339 a7.5 7.5 0 0 1 6.5 6.5 h-6.5z" fill="#c8d0d8"/><path d="M25 348 l5 5" stroke="#c8d0d8" stroke-width="1.5"/><circle cx="21.5" cy="392" r="4.8" fill="none" stroke="#c8d0d8" stroke-width="3" stroke-dasharray="1.8 1.2"/><circle cx="21.5" cy="392" r="3" fill="none" stroke="#c8d0d8" stroke-width="2"/><circle cx="30" cy="387" r="2.5" fill="none" stroke="#c8d0d8" stroke-width="1.8"/><circle cx="30" cy="398" r="2.5" fill="none" stroke="#c8d0d8" stroke-width="1.8"/><circle cx="23" cy="435" r="7" fill="#c8d0d8"/><rect x="22" y="433" width="2.3" height="6" fill="#232a31"/><circle cx="23.1" cy="430.5" r="1.3" fill="#232a31"/><rect x="18.5" y="472.5" width="15" height="11" fill="none" stroke="#c8d0d8" stroke-width="1.6"/><path d="M18.5 475 h-2 v8 h2" fill="none" stroke="#c8d0d8" stroke-width="1.2"/><rect x="21" y="475" width="5" height="4" fill="#c8d0d8"/><path d="M27.5 475.5 h4 M27.5 478 h4 M21 481 h10.5" stroke="#c8d0d8" stroke-width="1.1"/><defs>
    <linearGradient id="lr" x1="0" y1="0" x2="0" y2="1"><stop offset="0" stop-color="#f08050"/><stop offset="1" stop-color="#c01008"/></linearGradient>
    <linearGradient id="lg" x1="0" y1="0" x2="0" y2="1"><stop offset="0" stop-color="#b8e858"/><stop offset="1" stop-color="#1a8a08"/></linearGradient>
    <linearGradient id="ly" x1="0" y1="0" x2="0" y2="1"><stop offset="0" stop-color="#ffe8b0"/><stop offset="1" stop-color="#f0a018"/></linearGradient></defs>
    <rect x="18" y="652.5" width="9.5" height="23.5" fill="url(#lr)" stroke="#f4a080" stroke-width="1.2"/>
    <rect x="30.2" y="648.5" width="9.5" height="27.5" fill="url(#lg)" stroke="#c8f090" stroke-width="1.2"/>
    <rect x="42.5" y="640.5" width="9.5" height="35.5" fill="url(#ly)" stroke="#ffe8a0" stroke-width="1.2"/>
    <rect x="17.5" y="677.5" width="10.5" height="4" fill="#7a3020" opacity=".45"/><rect x="29.7" y="677.5" width="10.5" height="4" fill="#3a6020" opacity=".45"/><rect x="42" y="677.5" width="10.5" height="4" fill="#806020" opacity=".45"/></svg>
<div class="t" id="t55" style="left:63.80px;top:641.50px;font-size:28px;color:#ffffff;font-weight:bold;font-family:'Liberation Sans',sans-serif;transform:scaleX(1.2006);">rafsoft</div>
<div class="t" id="t56" style="left:168.60px;top:641.50px;font-size:28px;color:#f4f4f4;font-weight:normal;font-family:'Liberation Sans',sans-serif;transform:scaleX(1.0684);">net</div>
<div class="t" id="t57" style="left:63.80px;top:668.72px;font-size:8.6px;color:#e0e0e0;font-weight:bold;font-family:'Liberation Sans',sans-serif;font-style:italic;transform:scaleX(1.0134);">Oprogramowanie dla firm</div>
<div class="a" style="left:0px;top:682px;width:1366px;height:26px;background:#6d6d6e"></div>
<div class="t" id="t58" style="left:997.50px;top:689.89px;font-size:12.3px;color:#f2f2f2;font-weight:normal;font-family:'Liberation Sans',sans-serif;transform:scaleX(1.0164);">Copyright 2022 by RAFSOFT.NET. Wszystkie prawa zastrzeżone.</div>
<div class="a" style="left:0px;top:708px;width:1366px;height:20px;background:#343335"></div>
<div class="a" style="left:0px;top:728px;width:1366px;height:1px;background:#e9ebef"></div>
<div class="t" id="t59" style="left:508.90px;top:712.84px;font-size:12px;color:#ededed;font-weight:normal;font-family:'Liberation Sans',sans-serif;transform:scaleX(0.9570);">2022-11-09</div>
<div class="t" id="t60" style="left:578.20px;top:712.84px;font-size:12px;color:#ededed;font-weight:normal;font-family:'Liberation Sans',sans-serif;transform:scaleX(0.9004);">RAZEM NETTO: 0,00 PLN</div>
<div class="t" id="t61" style="left:974.30px;top:712.84px;font-size:12px;color:#ededed;font-weight:normal;font-family:'Liberation Sans',sans-serif;transform:scaleX(0.8938);">RAZEM BRUTTO: 0,00 PLN</div>
<div class="a" style="left:276px;top:155px;width:815px;height:457px;background:#f0f0f0;box-shadow:5px 6px 10px -1px rgba(0,0,0,.2), -2px 1px 7px rgba(0,0,0,.12)"></div>
<div class="a" style="left:276px;top:155px;width:815px;height:25px;background:#fff"></div>
<svg class="a" style="left:280px;top:161px;" width="15" height="14" viewBox="0 0 15 14"><path d="M1.3 1.1 H3.8 V2.3 H7.9 V3.4 H10.8 V11.7 H8.2 V10.6 H4 V9.5 H1.3z" fill="#fff" stroke="#000" stroke-width="1.1" stroke-linejoin="miter"/><path d="M1.9 2.7 h1.9 M4.2 3.6 h3.6 M8.2 4.6 h2.2 M4.2 4.3 h3.6" stroke="#60c8b8" stroke-width="0.8"/><path d="M11.3 8 l2.4 1.6 -2.2 1.6z" fill="#999"/></svg>
<div class="t" id="t62" style="left:300.80px;top:160.90px;font-size:11.7px;color:#111;font-weight:normal;font-family:'Liberation Sans',sans-serif;transform:scaleX(1.0125);">Nota obciążeniowa</div>
<svg class="a" style="left:1069px;top:161px;" width="12" height="12" viewBox="0 0 12 12"><path d="M1 1 L11 11 M11 1 L1 11" stroke="#111" stroke-width="1.1"/></svg>
<div class="a" style="left:284px;top:194px;width:384px;height:178px;border:1px solid #a6a6a6;box-shadow:1px 1px 0 #fff, inset 1px 1px 0 #fff"></div>
<div class="a" style="left:284px;top:386px;width:384px;height:178px;border:1px solid #a6a6a6;box-shadow:1px 1px 0 #fff, inset 1px 1px 0 #fff"></div>
<div class="a" style="left:676px;top:194px;width:384px;height:146px;border:1px solid #a6a6a6;box-shadow:1px 1px 0 #fff, inset 1px 1px 0 #fff"></div>
<div class="a" style="left:676px;top:354px;width:384px;height:213px;border:1px solid #a6a6a6;box-shadow:1px 1px 0 #fff, inset 1px 1px 0 #fff"></div>
<div class="a" style="left:291px;top:188px;width:84px;height:12px;background:#f0f0f0"></div>
<div class="t" id="t63" style="left:293.80px;top:189.47px;font-size:11.5px;color:#000;font-weight:normal;font-family:'Liberation Sans',sans-serif;transform:scaleX(0.9179);">Dane wierzyciela</div>
<div class="a" style="left:291px;top:380px;width:74px;height:12px;background:#f0f0f0"></div>
<div class="t" id="t64" style="left:293.60px;top:381.47px;font-size:11.5px;color:#000;font-weight:normal;font-family:'Liberation Sans',sans-serif;transform:scaleX(0.9631);">Dane dłużnika</div>
<div class="a" style="left:364px;top:212px;width:283px;height:20px;background:#fff;border:1px solid #7a7a7a"></div>
<div class="a" style="left:364px;top:236px;width:283px;height:20px;background:#fff;border:1px solid #7a7a7a"></div>
<div class="a" style="left:364px;top:260px;width:59px;height:20px;background:#fff;border:1px solid #7a7a7a"></div>
<div class="a" style="left:516px;top:260px;width:131px;height:20px;background:#fff;border:1px solid #7a7a7a"></div>
<div class="a" style="left:364px;top:284px;width:107px;height:20px;background:#fff;border:1px solid #7a7a7a"></div>
<div class="a" style="left:516px;top:284px;width:131px;height:20px;background:#fff;border:1px solid #7a7a7a"></div>
<div class="t" id="t65" style="left:297.20px;top:215.66px;font-size:10.8px;color:#000;font-weight:normal;font-family:'Liberation Sans',sans-serif;transform:scaleX(1.0034);">Nazwa firmy:</div>
<div class="t" id="t66" style="left:301.70px;top:239.66px;font-size:10.8px;color:#000;font-weight:normal;font-family:'Liberation Sans',sans-serif;transform:scaleX(1.0088);">Adres firmy:</div>
<div class="t" id="t67" style="left:338.20px;top:263.66px;font-size:10.8px;color:#000;font-weight:normal;font-family:'Liberation Sans',sans-serif;transform:scaleX(0.9722);">Kod:</div>
<div class="t" id="t68" style="left:450.00px;top:263.66px;font-size:10.8px;color:#000;font-weight:normal;font-family:'Liberation Sans',sans-serif;transform:scaleX(0.9781);">Miejscowość:</div>
<div class="t" id="t69" style="left:339.70px;top:287.66px;font-size:10.8px;color:#000;font-weight:bold;font-family:'Liberation Sans',sans-serif;">NIP:</div>
<div class="t" id="t70" style="left:475.30px;top:287.66px;font-size:10.8px;color:#000;font-weight:normal;font-family:'Liberation Sans',sans-serif;transform:scaleX(1.0078);">Regon:</div>
<div class="a" style="left:548px;top:316px;width:97px;height:41px;background:#ebebeb;border:1px solid #cfcfcf"></div>
<svg class="a" style="left:561px;top:320px;" width="32" height="33" viewBox="0 0 32 33">
    <path d="M0.5 27 h19 l10.5 -10 v2.5 l-10 12.5 h-18.5z" fill="#9a7456"/>
    <path d="M0.5 27 h19 l10.5 -10" fill="none" stroke="#c8a888" stroke-width="0.8"/>
    <path d="M1 32 h18.5 l10.5 -12.5" fill="none" stroke="#5a3e28" stroke-width="1"/>
    <rect x="21.5" y="11.5" width="4.5" height="12" fill="#f4f4f4" stroke="#999" stroke-width="0.8"/>
    <rect x="5.5" y="8.5" width="16.5" height="11" fill="#fbfbfb" stroke="#8a8a8a" stroke-width="0.9"/>
    <path d="M7.5 11.5 h8 M7.5 13.5 h10 M7.5 15.5 h7" stroke="#9ab0d0" stroke-width="0.8"/>
    <rect x="3.5" y="17.5" width="16" height="10.5" fill="#fdfdfd" stroke="#8a8a8a" stroke-width="0.9"/>
    <path d="M5.5 20 h9 M5.5 22 h8 M5.5 24 h10" stroke="#a0a0a0" stroke-width="0.7"/>
    <path d="M4 1.5 h7 q5 -0.5 6 4 q0.5 4 -3 4.5 l-4 -1 q-3 -1 -4 -2.5 h-2z" fill="#e8b830" stroke="#9a7410" stroke-width="0.7"/>
    <circle cx="12.8" cy="6" r="2.2" fill="none" stroke="#9a7410" stroke-width="0.9"/>
    <rect x="0" y="1" width="4.5" height="6" fill="#fff" stroke="#aaa" stroke-width="0.6"/>
    </svg>
<div class="t" id="t71" style="left:595.00px;top:332.06px;font-size:10.8px;color:#000;font-weight:normal;font-family:'Liberation Sans',sans-serif;transform:scaleX(0.9767);">Wybierz</div>
<div class="a" style="left:606px;top:342.5px;width:5.5px;height:1px;background:#111"></div>
<div class="a" style="left:364px;top:404px;width:283px;height:20px;background:#fff;border:1px solid #7a7a7a"></div>
<div class="a" style="left:364px;top:428px;width:283px;height:20px;background:#fff;border:1px solid #7a7a7a"></div>
<div class="a" style="left:364px;top:452px;width:59px;height:20px;background:#fff;border:1px solid #7a7a7a"></div>
<div class="a" style="left:516px;top:452px;width:131px;height:20px;background:#fff;border:1px solid #7a7a7a"></div>
<div class="a" style="left:364px;top:476px;width:107px;height:20px;background:#fff;border:1px solid #7a7a7a"></div>
<div class="a" style="left:516px;top:476px;width:131px;height:20px;background:#fff;border:1px solid #7a7a7a"></div>
<div class="t" id="t72" style="left:297.20px;top:407.66px;font-size:10.8px;color:#000;font-weight:normal;font-family:'Liberation Sans',sans-serif;transform:scaleX(1.0034);">Nazwa firmy:</div>
<div class="t" id="t73" style="left:301.70px;top:431.66px;font-size:10.8px;color:#000;font-weight:normal;font-family:'Liberation Sans',sans-serif;transform:scaleX(1.0088);">Adres firmy:</div>
<div class="t" id="t74" style="left:338.20px;top:455.66px;font-size:10.8px;color:#000;font-weight:normal;font-family:'Liberation Sans',sans-serif;transform:scaleX(0.9722);">Kod:</div>
<div class="t" id="t75" style="left:450.00px;top:455.66px;font-size:10.8px;color:#000;font-weight:normal;font-family:'Liberation Sans',sans-serif;transform:scaleX(0.9781);">Miejscowość:</div>
<div class="t" id="t76" style="left:339.70px;top:479.66px;font-size:10.8px;color:#000;font-weight:bold;font-family:'Liberation Sans',sans-serif;">NIP:</div>
<div class="t" id="t77" style="left:475.30px;top:479.66px;font-size:10.8px;color:#000;font-weight:normal;font-family:'Liberation Sans',sans-serif;transform:scaleX(1.0078);">Regon:</div>
<div class="a" style="left:548px;top:508px;width:97px;height:41px;background:#ebebeb;border:1px solid #cfcfcf"></div>
<svg class="a" style="left:561px;top:512px;" width="32" height="33" viewBox="0 0 32 33">
    <path d="M0.5 27 h19 l10.5 -10 v2.5 l-10 12.5 h-18.5z" fill="#9a7456"/>
    <path d="M0.5 27 h19 l10.5 -10" fill="none" stroke="#c8a888" stroke-width="0.8"/>
    <path d="M1 32 h18.5 l10.5 -12.5" fill="none" stroke="#5a3e28" stroke-width="1"/>
    <rect x="21.5" y="11.5" width="4.5" height="12" fill="#f4f4f4" stroke="#999" stroke-width="0.8"/>
    <rect x="5.5" y="8.5" width="16.5" height="11" fill="#fbfbfb" stroke="#8a8a8a" stroke-width="0.9"/>
    <path d="M7.5 11.5 h8 M7.5 13.5 h10 M7.5 15.5 h7" stroke="#9ab0d0" stroke-width="0.8"/>
    <rect x="3.5" y="17.5" width="16" height="10.5" fill="#fdfdfd" stroke="#8a8a8a" stroke-width="0.9"/>
    <path d="M5.5 20 h9 M5.5 22 h8 M5.5 24 h10" stroke="#a0a0a0" stroke-width="0.7"/>
    <path d="M4 1.5 h7 q5 -0.5 6 4 q0.5 4 -3 4.5 l-4 -1 q-3 -1 -4 -2.5 h-2z" fill="#e8b830" stroke="#9a7410" stroke-width="0.7"/>
    <circle cx="12.8" cy="6" r="2.2" fill="none" stroke="#9a7410" stroke-width="0.9"/>
    <rect x="0" y="1" width="4.5" height="6" fill="#fff" stroke="#aaa" stroke-width="0.6"/>
    </svg>
<div class="t" id="t78" style="left:595.00px;top:524.06px;font-size:10.8px;color:#000;font-weight:normal;font-family:'Liberation Sans',sans-serif;transform:scaleX(0.9767);">Wybierz</div>
<div class="a" style="left:606px;top:534.5px;width:5.5px;height:1px;background:#111"></div>
<div class="t" id="t79" style="left:684.60px;top:215.27px;font-size:11.5px;color:#000;font-weight:normal;font-family:'Liberation Sans',sans-serif;transform:scaleX(0.9142);">Numer Noty Obciążeniowej:</div>
<div class="t" id="t80" style="left:684.60px;top:239.87px;font-size:11.5px;color:#000;font-weight:normal;font-family:'Liberation Sans',sans-serif;transform:scaleX(0.9249);">Data Wystawienia:</div>
<div class="t" id="t81" style="left:684.60px;top:261.67px;font-size:11.5px;color:#000;font-weight:normal;font-family:'Liberation Sans',sans-serif;transform:scaleX(0.9270);">Termin płatności:</div>
<div class="t" id="t82" style="left:684.60px;top:285.87px;font-size:11.5px;color:#000;font-weight:normal;font-family:'Liberation Sans',sans-serif;transform:scaleX(0.9302);">Rachunek do zwrotu:</div>
<div class="a" style="left:852px;top:214px;width:127px;height:17px;background:#fff;border:1px solid #7a7a7a"></div>
<div class="a" style="left:852px;top:238px;width:127px;height:17px;background:#fff;border:1px solid #7a7a7a"></div>
<div class="a" style="left:852px;top:260px;width:127px;height:17px;background:#fff;border:1px solid #7a7a7a"></div>
<div class="t" id="t83" style="left:860.30px;top:242.92px;font-size:11.2px;color:#000;font-weight:normal;font-family:'Liberation Sans',sans-serif;transform:scaleX(1.1594);">09-11-2022</div>
<div class="t" id="t84" style="left:860.30px;top:264.92px;font-size:11.2px;color:#000;font-weight:normal;font-family:'Liberation Sans',sans-serif;transform:scaleX(1.1594);">09-11-2022</div>
<div class="a" style="left:684px;top:308px;width:353px;height:21px;background:#fff;border:1px solid #7a7a7a"></div>
<div class="t" id="t85" style="left:692.20px;top:313.72px;font-size:11.2px;color:#000;font-weight:normal;font-family:'Liberation Sans',sans-serif;transform:scaleX(1.1598);">PKO BP S.A. COI 50 10205558111121883100048</div>
<div class="a" style="left:1017px;top:311px;width:17px;height:16px;background:#e6e6e6;border:1px solid #8a8a8a"></div>
<svg class="a" style="left:1020px;top:316px;" width="11" height="7" viewBox="0 0 11 7"><path d="M1.5 1 h8 l-4 5z" fill="#111"/></svg>
<div class="t" id="t86" style="left:684.60px;top:373.27px;font-size:11.5px;color:#000;font-weight:normal;font-family:'Liberation Sans',sans-serif;transform:scaleX(0.9831);">Treść noty:</div>
<div class="a" style="left:684px;top:388px;width:369px;height:107px;background:#fff;border:1px solid #7a7a7a"></div>
<div class="t" id="t87" style="left:692.60px;top:392.47px;font-size:11.5px;color:#000;font-weight:normal;font-family:'Liberation Sans',sans-serif;transform:scaleX(0.9151);">Niniejszym obciążamy Państwa kwotą</div>
<div class="a" style="left:676px;top:580px;width:97px;height:25px;background:#ececec;border:1px solid #cdcdcd"></div>
<div class="t" id="t88" style="left:705.30px;top:587.23px;font-size:11.9px;color:#000;font-weight:normal;font-family:'Liberation Sans',sans-serif;transform:scaleX(0.9225);">Zamknij</div>
<div class="a" style="left:705.5px;top:599px;width:6.5px;height:1px;background:#111"></div>
<div class="a" style="left:964px;top:580px;width:97px;height:25px;background:#ececec;border:1px solid #cdcdcd"></div>
<svg class="a" style="left:986px;top:584px;" width="17" height="16" viewBox="0 0 17 16"><rect x="4" y="1" width="9" height="5" fill="#fff" stroke="#777" stroke-width="0.8"/><rect x="1" y="5" width="15" height="7" rx="1" fill="#9a9a9a" stroke="#666" stroke-width="0.8"/><rect x="4" y="10" width="9" height="5" fill="#f4f4f4" stroke="#777" stroke-width="0.8"/><rect x="6" y="13" width="5" height="2.5" fill="#4a90d0"/></svg>
<div class="t" id="t89" style="left:1005.50px;top:587.23px;font-size:11.9px;color:#000;font-weight:normal;font-family:'Liberation Sans',sans-serif;transform:scaleX(0.9484);">Drukuj</div>
<div class="a" style="left:1005.5px;top:599px;width:8px;height:1px;background:#111"></div>
<div class="a" style="left:1091px;top:161px;width:13px;height:47px;background:linear-gradient(to right,#c4c4c4,#e2e2e2 60%,#ececec)"></div>
<div class="a" style="left:1091px;top:161px;width:13px;height:2.5px;background:#000"></div>
<div class="a" style="left:1091px;top:208px;width:16px;height:398px;background:linear-gradient(to right,rgba(0,0,0,.1),rgba(0,0,0,.03) 60%,rgba(0,0,0,0))"></div></body></html>
